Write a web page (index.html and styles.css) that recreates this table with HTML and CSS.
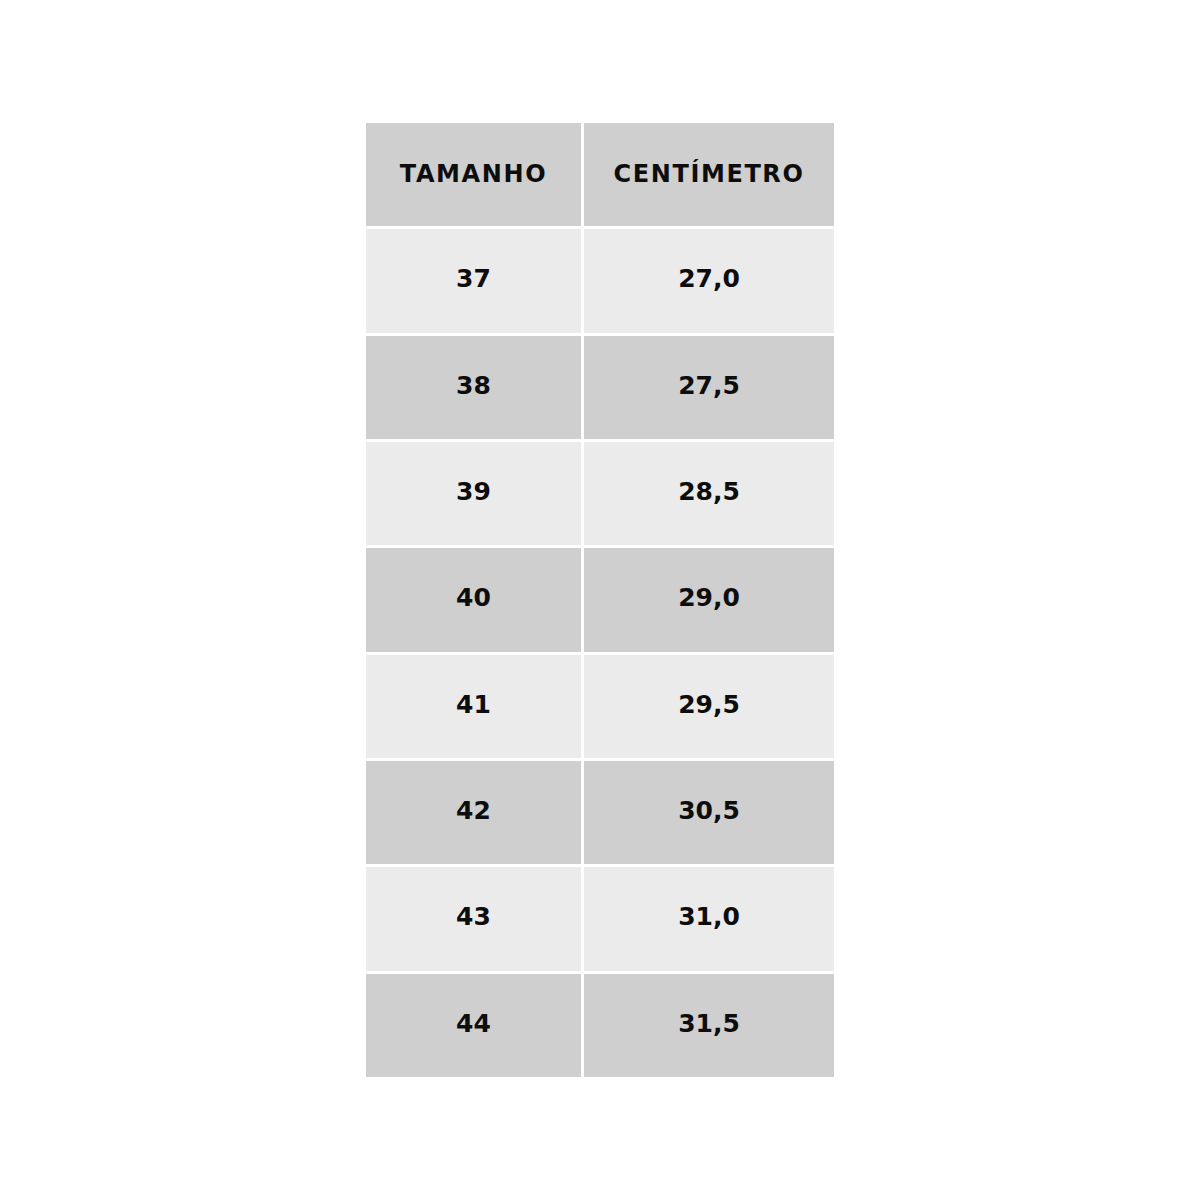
FILE: index.html
```html
<!DOCTYPE html>
<html lang="pt">
<head>
<meta charset="utf-8">
<title>Tabela de medidas</title>
<link rel="stylesheet" href="styles.css">
</head>
<body>
<main class="page">
  <div class="table">
    <div class="cell head">TAMANHO</div>
    <div class="cell head">CENTÍMETRO</div>
    <div class="cell light">37</div><div class="cell light">27,0</div>
    <div class="cell dark">38</div><div class="cell dark">27,5</div>
    <div class="cell light">39</div><div class="cell light">28,5</div>
    <div class="cell dark">40</div><div class="cell dark">29,0</div>
    <div class="cell light">41</div><div class="cell light">29,5</div>
    <div class="cell dark">42</div><div class="cell dark">30,5</div>
    <div class="cell light">43</div><div class="cell light">31,0</div>
    <div class="cell dark">44</div><div class="cell dark">31,5</div>
  </div>
</main>
</body>
</html>
```
FILE: styles.css
```css
html, body {
  margin: 0;
  padding: 0;
  background: #ffffff;
}
.page {
  width: 1200px;
  height: 1200px;
  display: flex;
  justify-content: center;
  padding-top: 123px;
  box-sizing: border-box;
}
.table {
  display: grid;
  grid-template-columns: 215px 250px;
  grid-template-rows: repeat(9, 1fr);
  gap: 3px;
  width: 468px;
  height: 954px;
  font-family: "DejaVu Sans", "Liberation Sans", sans-serif;
  font-weight: 700;
  color: #0d0d0d;
}
.cell {
  display: flex;
  align-items: center;
  justify-content: center;
  font-size: 25px;
  padding-bottom: 4px;
}
.head {
  background: #cfcfcf;
  font-size: 24px;
  letter-spacing: 1.6px;
  padding-bottom: 2px;
}
.light { background: #ebebeb; }
.dark { background: #cfcfcf; }
```
